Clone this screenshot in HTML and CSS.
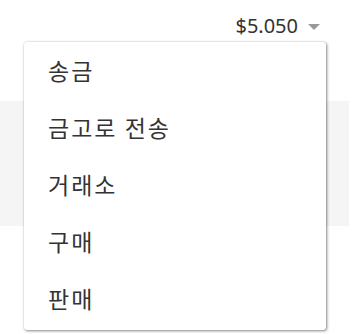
FILE: index.html
```html
<!DOCTYPE html>
<html>

<head>
  <title>지갑</title>
  <meta charset="UTF-8">
  <meta name="viewport" content="width=device-width, initial-scale=1.0">
  <link rel="stylesheet" href="styles.css">
</head>

<body>
  <div class="top">
    <div class="balance">
      <span class="amount">$5.050</span>
      <span class="caret"></span>
    </div>
  </div>
  <div class="band"></div>

  <ul class="menu">
    <li>송금</li>
    <li>금고로 전송</li>
    <li>거래소</li>
    <li>구매</li>
    <li>판매</li>
  </ul>
</body>

</html>
```

FILE: styles.css
```css
body {
  margin: 0;
  background-color: #fff;
  font-family: "Noto Sans", "Noto Sans CJK KR", sans-serif;
  color: #333;
}

.top {
  height: 101px;
  display: flex;
  justify-content: flex-end;
  align-items: flex-start;
}

.balance {
  display: flex;
  align-items: center;
  margin-top: 12px;
  margin-right: 42px;
}

.amount {
  font-size: 20px;
  line-height: 28px;
  color: #333;
}

.caret {
  width: 0;
  height: 0;
  margin-left: 10px;
  margin-top: 1px;
  border-left: 6px solid transparent;
  border-right: 6px solid transparent;
  border-top: 6px solid #999;
}

.band {
  width: 349px;
  height: 125px;
  background-color: #f5f5f5;
}

.menu {
  position: absolute;
  top: 42px;
  left: 24px;
  width: 302px;
  margin: 0;
  padding: 0 0 3px 0;
  list-style: none;
  background-color: #fff;
  border-radius: 3px;
  box-shadow: 1px 1px 3px rgba(0, 0, 0, .45), 0 0 2px rgba(0, 0, 0, .15);
}

.menu>li {
  height: 57px;
  line-height: 56px;
  padding-left: 24px;
  font-family: "Noto Sans CJK KR", sans-serif;
  font-size: 23px;
  letter-spacing: 2px;
  color: #333;
}
```
